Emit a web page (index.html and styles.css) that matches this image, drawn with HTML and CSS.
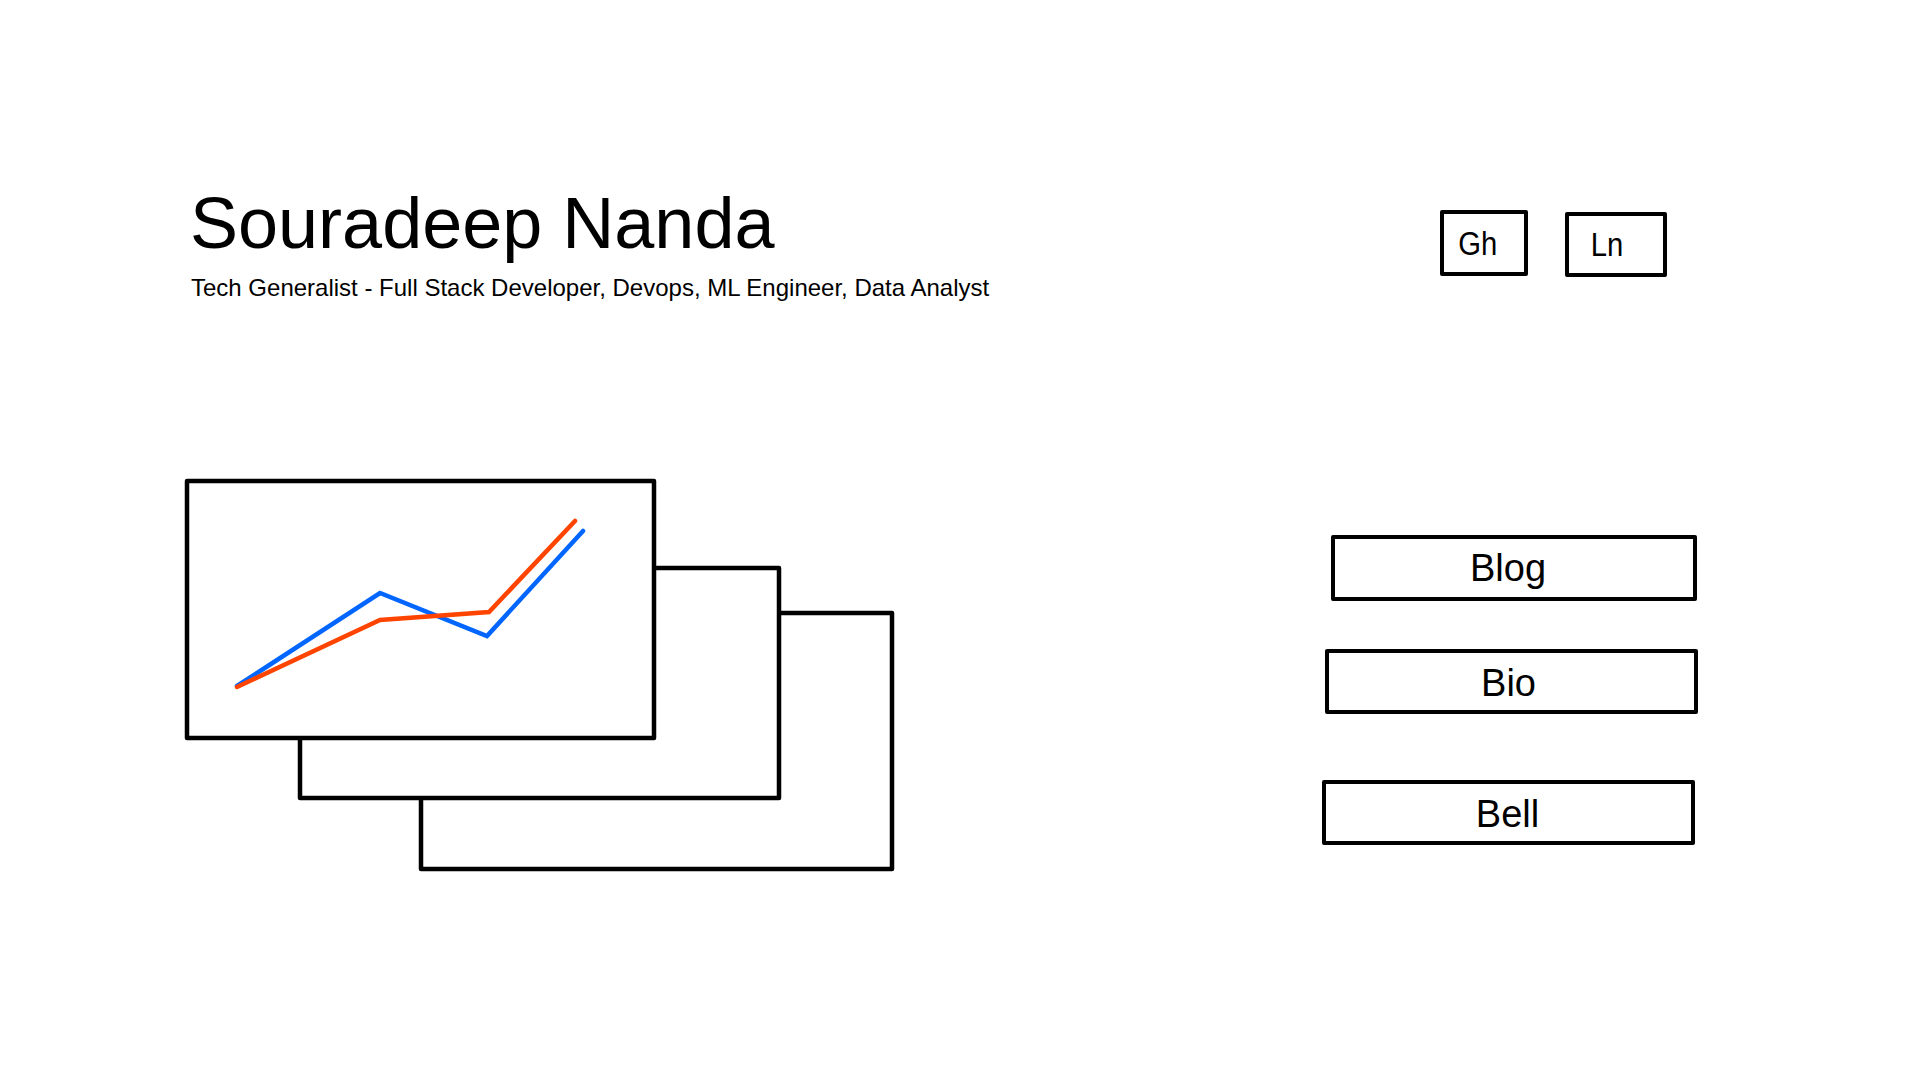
FILE: index.html
```html
<!DOCTYPE html>
<html lang="en">
<head>
<meta charset="utf-8">
<title>Souradeep Nanda</title>
<link rel="stylesheet" href="styles.css">
</head>
<body>
<header class="header">
  <div class="intro">
    <h1 class="title">Souradeep Nanda</h1>
    <p class="subtitle">Tech Generalist - Full Stack Developer, Devops, ML Engineer, Data Analyst</p>
  </div>
  <nav class="links">
    <a class="link link-gh" href="#"><span class="link-text">Gh</span></a>
    <a class="link link-ln" href="#"><span class="link-text">Ln</span></a>
  </nav>
</header>
<main class="main">
  <svg class="chart" width="720" height="400" viewBox="0 0 720 400" xmlns="http://www.w3.org/2000/svg">
    <g fill="#fff" stroke="#000" stroke-width="4.5" stroke-linejoin="round">
      <rect x="241" y="138" width="471" height="256"/>
      <rect x="120" y="93" width="479" height="230"/>
      <rect x="7" y="6" width="467" height="257"/>
    </g>
    <g fill="none" stroke-width="4.5" stroke-linecap="round" stroke-linejoin="miter">
      <polyline stroke="#0066ff" points="57,211 200,118 307,161 403,56"/>
      <polyline stroke="#ff4400" points="57,212 200,145 309,137 395,46"/>
    </g>
  </svg>
  <div class="actions">
    <a class="action action-blog" href="#">Blog</a>
    <a class="action action-bio" href="#">Bio</a>
    <a class="action action-bell" href="#">Bell</a>
  </div>
</main>
</body>
</html>
```
FILE: styles.css
```css
html, body {
  margin: 0;
  padding: 0;
  background: #fff;
}
body {
  width: 1920px;
  height: 1080px;
  overflow: hidden;
  font-family: "Liberation Sans", Arial, sans-serif;
  color: #000;
}
a {
  color: #000;
  text-decoration: none;
}
.header {
  display: flex;
  align-items: flex-start;
  padding: 187px 253px 0 190px;
}
.intro {
  flex: 1;
}
.title {
  margin: 0;
  font-size: 72px;
  line-height: 72px;
  font-weight: normal;
}
.subtitle {
  margin: 17px 0 0 1px;
  font-size: 24px;
  line-height: 24px;
}
.links {
  display: flex;
  align-items: flex-start;
  gap: 37px;
  margin-top: 23px;
}
.link {
  box-sizing: border-box;
  display: flex;
  align-items: center;
  justify-content: center;
  border: 4px solid #000;
  border-radius: 2px;
  font-size: 34px;
}
.link-text {
  display: inline-block;
  transform: scaleX(0.86);
}
.link-gh {
  width: 88px;
  height: 66px;
  line-height: 58px;
  padding-right: 12px;
}
.link-ln {
  width: 102px;
  height: 65px;
  line-height: 57px;
  margin-top: 2px;
  padding-right: 18px;
}
.main {
  display: flex;
  align-items: flex-start;
  margin-top: 175px;
  padding-left: 180px;
}
.chart {
  display: block;
  flex: none;
}
.actions {
  display: flex;
  flex-direction: column;
  align-items: flex-start;
  margin-left: 422px;
  margin-top: 60px;
}
.action {
  box-sizing: border-box;
  display: block;
  border: 4px solid #000;
  border-radius: 2px;
  text-align: center;
  font-size: 38px;
}
.action-blog {
  width: 366px;
  height: 66px;
  line-height: 58px;
  margin-left: 9px;
  padding-right: 12px;
}
.action-bio {
  width: 373px;
  height: 65px;
  line-height: 54px;
  padding-top: 3px;
  margin-left: 3px;
  margin-top: 48px;
  padding-right: 6px;
}
.action-bell {
  width: 373px;
  height: 65px;
  line-height: 53px;
  padding-top: 4px;
  margin-top: 66px;
  padding-right: 2px;
}
```
